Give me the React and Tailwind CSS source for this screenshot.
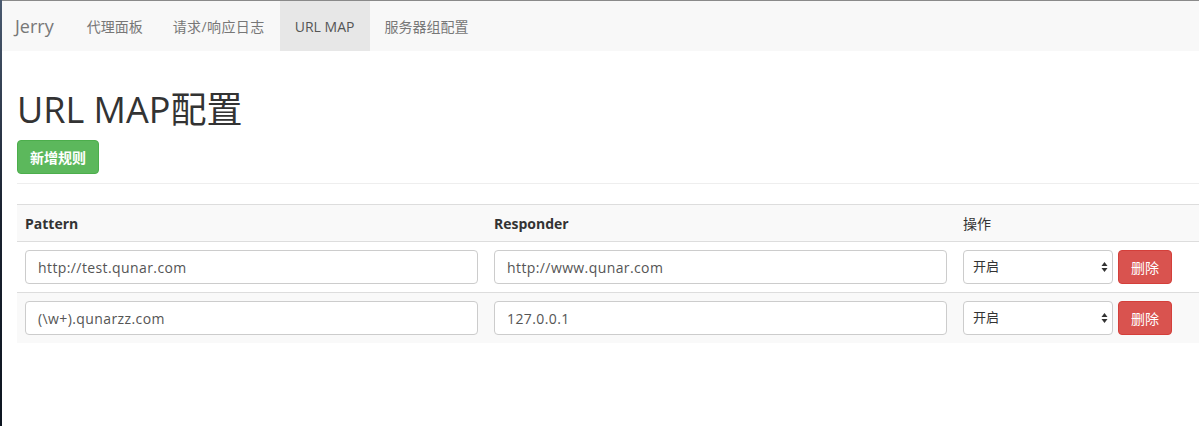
import React from "react";

const font = { fontFamily: '"Open Sans", "Noto Sans CJK SC", sans-serif' };

function SelectArrows() {
  return (
    <svg width="7" height="12" viewBox="0 0 7 12" className="absolute right-[4px] top-1/2 -translate-y-1/2">
      <path d="M3.5 1 L6.5 5 L0.5 5 Z" fill="#333" />
      <path d="M3.5 11 L6.5 7 L0.5 7 Z" fill="#333" />
    </svg>
  );
}

function Row({ pattern, responder, striped }) {
  return (
    <tr className={`${striped ? "bg-[#f9f9f9]" : "bg-white"} border-t border-[#dddddd]`}>
      <td className="px-[8px] py-[8px]">
        <div className="h-[34px] border border-[#cccccc] rounded-[4px] bg-white px-[12px] flex items-center text-[14px] tracking-[0.4px] text-[#555]">{pattern}</div>
      </td>
      <td className="px-[8px] py-[8px]">
        <div className="h-[34px] border border-[#cccccc] rounded-[4px] bg-white px-[12px] flex items-center text-[14px] tracking-[0.4px] text-[#555]">{responder}</div>
      </td>
      <td className="px-[8px] py-[8px]">
        <div className="flex items-center gap-[5px]">
          <div className="relative w-[150px] h-[34px] border border-[#cccccc] rounded-[4px] bg-white pl-[9px] flex items-center text-[13px] text-[#333]">
            开启
            <SelectArrows />
          </div>
          <div className="h-[34px] w-[54px] rounded-[4px] bg-[#d9534f] border border-[#d43f3a] flex items-center justify-center text-[14px] text-white">删除</div>
        </div>
      </td>
    </tr>
  );
}

export default function App() {
  return (
    <div className="w-[1199px] h-[426px] overflow-hidden bg-white flex" style={font}>
      <div className="w-[2px] h-full bg-gradient-to-b from-[#4a5a70] via-[#1a2230] to-[#0d1520] shrink-0" />
      <div className="flex-1 flex flex-col">
        <div className="h-[1px] bg-[#8a8a8a]" />
        <nav className="h-[50px] bg-[#f8f8f8] flex items-stretch text-[14px] text-[#777]">
          <div className="pl-[13px] pr-[18px] flex items-center text-[18px]">Jerry</div>
          <div className="px-[15px] flex items-center">代理面板</div>
          <div className="px-[15px] flex items-center tracking-[0.4px]">请求/响应日志</div>
          <div className="px-[15px] flex items-center bg-[#e7e7e7] text-[#555] w-[90px] justify-center">URL MAP</div>
          <div className="px-[15px] flex items-center">服务器组配置</div>
        </nav>
        <div className="pl-[15px]">
          <h1 className="mt-[39px] mb-[10px] text-[36px] leading-[40px] text-[#333]">URL MAP配置</h1>
          <div className="inline-flex h-[34px] px-[12px] items-center rounded-[4px] bg-[#5cb85c] border border-[#4cae4c] text-white text-[14px] font-bold">新增规则</div>
          <div className="mt-[9px] mb-[20px] h-[1px] bg-[#eeeeee]" />
          <table className="w-full border-collapse text-[14px] text-[#333]">
            <colgroup>
              <col className="w-[469px]" />
              <col className="w-[469px]" />
              <col />
            </colgroup>
            <thead>
              <tr className="bg-[#f9f9f9] border-t border-b border-[#dddddd]">
                <th className="text-left font-bold px-[8px] h-[37px]">Pattern</th>
                <th className="text-left font-bold px-[8px]">Responder</th>
                <th className="text-left font-normal px-[8px]">操作</th>
              </tr>
            </thead>
            <tbody>
              <Row pattern="http://test.qunar.com" responder="http://www.qunar.com" />
              <Row pattern="(\w+).qunarzz.com" responder="127.0.0.1" striped />
            </tbody>
          </table>
        </div>
      </div>
    </div>
  );
}
